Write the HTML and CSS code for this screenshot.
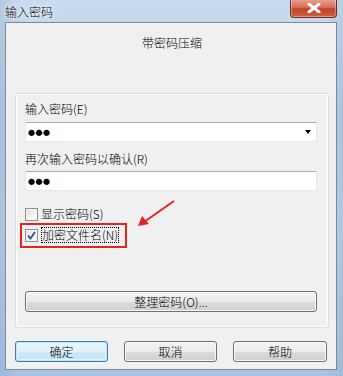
FILE: index.html
```html
<!DOCTYPE html>
<html lang="zh-CN">
<head>
    <meta charset="UTF-8">
    <title>输入密码</title>
    <link rel="stylesheet" href="styles.css">
</head>
<body>
    <div class="window">
        <div class="titlebar">
            <span class="title">输入密码</span>
            <span class="close-btn">
                <svg width="14" height="10" viewBox="0 0 14 10">
                    <path d="M2 1 L12 9 M12 1 L2 9" stroke="#ffffff" stroke-width="3" stroke-linecap="round"/>
                </svg>
            </span>
        </div>

        <div class="client">
            <div class="heading">带密码压缩</div>

            <div class="panel">
                <div class="label first">输入密码(E)</div>
                <div class="field combo">
                    <span class="dots">●●●</span>
                    <span class="arrow"></span>
                </div>

                <div class="label second">再次输入密码以确认(R)</div>
                <div class="field">
                    <span class="dots">●●●</span>
                </div>

                <div class="check-row">
                    <span class="checkbox"></span>
                    <span>显示密码(S)</span>
                </div>

                <div class="check-row marked">
                    <span class="checkbox checked">
                        <svg width="9" height="9" viewBox="0 0 9 9">
                            <path d="M1 4.5 L3.5 7.5 L8 1" stroke="#2c4f9e" stroke-width="1.8" fill="none"/>
                        </svg>
                    </span>
                    <span class="focus">加密文件名(N)</span>
                </div>

                <div class="btn wide">整理密码(O)...</div>
            </div>

            <div class="button-row">
                <div class="btn default">确定</div>
                <div class="btn">取消</div>
                <div class="btn">帮助</div>
            </div>
        </div>
    </div>

    <!-- annotation arrow -->
    <svg class="annotation" width="40" height="30" viewBox="0 0 40 30">
        <path d="M38 2 L8 23" stroke="#e42424" stroke-width="2" fill="none"/>
        <path d="M2 27 L6 17 L13 25 Z" fill="#e42424"/>
    </svg>
</body>
</html>
```

FILE: styles.css
```css
body {
    margin: 0;
    position: relative;
    width: 343px;
    height: 376px;
    overflow: hidden;
    font-family: "Noto Sans CJK SC", "Noto Sans", sans-serif;
    font-size: 12px;
    font-weight: 300;
    color: #000;
}

.window {
    height: 376px;
    box-sizing: border-box;
    padding: 0 6px 6px 5px;
    background:
        linear-gradient(to right, rgba(120, 150, 185, 0.25) 0%, rgba(255, 255, 255, 0) 6%, rgba(255, 255, 255, 0) 94%, rgba(120, 150, 185, 0.2) 100%),
        linear-gradient(to bottom, #c9dbee 0%, #b6cde6 30%, #bcd2ea 60%, #a9c3e0 100%);
    display: flex;
    flex-direction: column;
}

.titlebar {
    height: 25px;
    display: flex;
    justify-content: space-between;
    align-items: flex-start;
}

.title {
    margin-top: 4px;
    line-height: 16px;
    text-shadow: 0 0 6px #ffffff, 0 0 3px #ffffff;
}

.close-btn {
    width: 45px;
    height: 18px;
    margin-top: -1px;
    border: 1px solid #6d2b22;
    border-top: none;
    border-radius: 0 0 4px 4px;
    background: linear-gradient(to bottom, #e8a493 0%, #d7705a 45%, #c24329 55%, #d0603f 100%);
    box-shadow: inset 0 0 0 1px rgba(255, 255, 255, 0.35);
    display: flex;
    justify-content: center;
    align-items: center;
}

.client {
    flex: 1;
    background: #f0f0f0;
    border: 1px solid #7d8a99;
    display: flex;
    flex-direction: column;
    padding: 0 7px 7px 9px;
}

.heading {
    text-align: center;
    padding-top: 12px;
    height: 58px;
    line-height: 16px;
}

.panel {
    border: 1px solid #d5dfe5;
    border-radius: 3px;
    box-shadow: inset 0 0 0 1px #ffffff;
    padding: 7px 10px 15px 9px;
    display: flex;
    flex-direction: column;
    align-items: flex-start;
}

.label {
    line-height: 16px;
}

.label.second {
    margin-top: 9px;
}

.field {
    width: 292px;
    height: 20px;
    box-sizing: border-box;
    background: #ffffff;
    border: 1px solid #e3e9ef;
    border-top-color: #abadb3;
    display: flex;
    align-items: center;
    justify-content: space-between;
    padding: 0 5px 0 2px;
    margin-top: 4px;
}

.combo {
    margin-top: 5px;
}

.dots {
    font-size: 7px;
    font-weight: 400;
    letter-spacing: 0.5px;
}

.arrow {
    width: 0;
    height: 0;
    border-left: 3.5px solid transparent;
    border-right: 3.5px solid transparent;
    border-top: 4px solid #000;
}

.check-row {
    display: flex;
    align-items: center;
    gap: 3px;
    margin-top: 15px;
    line-height: 16px;
}

.check-row.marked {
    margin-top: 1px;
    margin-left: -5px;
    border: 2px solid #e42424;
    padding: 2px 6px 3px 3px;
}

.checkbox {
    width: 11px;
    height: 11px;
    border: 1px solid #8e8f8f;
    background: linear-gradient(135deg, #dcdcdc 0%, #f4f4f4 60%, #ffffff 100%);
    box-shadow: inset 0 0 0 1px #f4f4f4;
    display: flex;
    align-items: center;
    justify-content: center;
}

.checkbox.checked {
    background: linear-gradient(135deg, #e4e4e4 0%, #fafafa 100%);
}

.focus {
    outline: 1px dotted #000;
    outline-offset: -1px;
    padding: 0 1px;
}

.btn {
    height: 21px;
    box-sizing: border-box;
    border: 1px solid #707070;
    border-radius: 3px;
    background: linear-gradient(to bottom, #f2f2f2 0%, #ebebeb 50%, #dddddd 51%, #cfcfcf 100%);
    box-shadow: inset 0 0 0 1px #f8f8f8;
    display: flex;
    align-items: center;
    justify-content: center;
    line-height: 16px;
}

.btn.wide {
    width: 292px;
    margin-top: 43px;
}

.button-row {
    display: flex;
    gap: 16px;
    margin-top: 13px;
}

.button-row .btn {
    width: 93px;
}

.button-row .btn:last-child {
    width: 94px;
}

.btn.default {
    border-color: #3c7fb1;
    background: linear-gradient(to bottom, #eaf6fd 0%, #e0f1fb 50%, #d1e9f6 51%, #c4e2f2 100%);
    box-shadow: inset 0 0 0 1px #bfe6fb, inset 0 0 0 2px #e3f4fc;
}

.annotation {
    position: absolute;
    left: 136px;
    top: 199px;
}
```
